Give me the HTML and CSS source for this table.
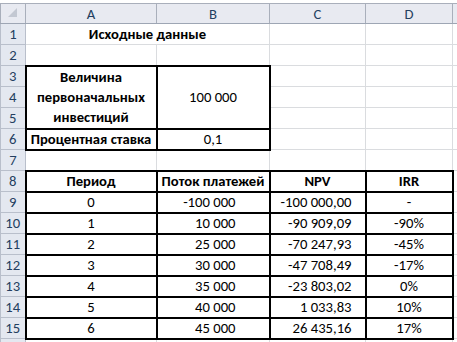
FILE: index.html
```html
<!DOCTYPE html>
<html lang="ru">
<head>
<meta charset="utf-8">
<title>Исходные данные</title>
<link rel="stylesheet" href="styles.css">
</head>
<body>
<table class="sheet">
  <colgroup>
    <col class="c-rh"><col class="c-a"><col class="c-b"><col class="c-c"><col class="c-d"><col class="c-e">
  </colgroup>
  <thead>
    <tr class="hdr">
      <th class="corner"><svg class="tri" width="9" height="9" viewBox="0 0 9 9"><polygon points="9,0 9,9 0,9" fill="#c3c8d2"/></svg></th>
      <th>A</th><th>B</th><th>C</th><th>D</th><th></th>
    </tr>
  </thead>
  <tbody>
    <tr><th>1</th><td colspan="2" class="b c">Исходные данные</td><td></td><td></td><td></td></tr>
    <tr><th>2</th><td></td><td></td><td></td><td></td><td></td></tr>
    <tr><th>3</th><td rowspan="3" class="tk b c multi">Величина<br>первоначальных<br>инвестиций</td><td rowspan="3" class="tk c">100&nbsp;000</td><td></td><td></td><td></td></tr>
    <tr><th>4</th><td></td><td></td><td></td></tr>
    <tr><th>5</th><td></td><td></td><td></td></tr>
    <tr><th>6</th><td class="tk b c">Процентная ставка</td><td class="tk c">0,1</td><td></td><td></td><td></td></tr>
    <tr><th>7</th><td></td><td></td><td></td><td></td><td></td></tr>
    <tr><th>8</th><td class="tk b c">Период</td><td class="tk b c">Поток платежей</td><td class="tk b c">NPV</td><td class="tk b c">IRR</td><td></td></tr>
    <tr><th>9</th><td class="tk c">0</td><td class="tk flow">-100&nbsp;000</td><td class="tk npv">-100&nbsp;000,00</td><td class="tk c">-</td><td></td></tr>
    <tr><th>10</th><td class="tk c">1</td><td class="tk flow">10&nbsp;000</td><td class="tk npv">-90&nbsp;909,09</td><td class="tk c">-90%</td><td></td></tr>
    <tr><th>11</th><td class="tk c">2</td><td class="tk flow">25&nbsp;000</td><td class="tk npv">-70&nbsp;247,93</td><td class="tk c">-45%</td><td></td></tr>
    <tr><th>12</th><td class="tk c">3</td><td class="tk flow">30&nbsp;000</td><td class="tk npv">-47&nbsp;708,49</td><td class="tk c">-17%</td><td></td></tr>
    <tr><th>13</th><td class="tk c">4</td><td class="tk flow">35&nbsp;000</td><td class="tk npv">-23&nbsp;803,02</td><td class="tk c">0%</td><td></td></tr>
    <tr><th>14</th><td class="tk c">5</td><td class="tk flow">40&nbsp;000</td><td class="tk npv">1&nbsp;033,83</td><td class="tk c">10%</td><td></td></tr>
    <tr><th>15</th><td class="tk c">6</td><td class="tk flow">45&nbsp;000</td><td class="tk npv">26&nbsp;435,16</td><td class="tk c">17%</td><td></td></tr>
    <tr><th></th><td></td><td></td><td></td><td></td><td></td></tr>
  </tbody>
</table>
</body>
</html>
```

FILE: styles.css
```css
html, body {
  margin: 0;
  padding: 0;
  background: #ffffff;
  overflow: hidden;
}
body {
  padding-top: 3px;
  font-family: Calibri, Carlito, "Liberation Sans", Arial, sans-serif;
  font-size: 14.67px;
  color: #000;
}
.sheet {
  border-collapse: collapse;
  table-layout: fixed;
  width: 512px;
}
.c-rh { width: 25px; }
.c-a { width: 131px; }
.c-b { width: 113px; }
.c-c { width: 96px; }
.c-d { width: 87px; }
.c-e { width: 60px; }

.sheet tr { height: 21px; }
.sheet tr.hdr { height: 20px; }

.sheet th {
  padding: 0;
  font-weight: normal;
  color: #243f60;
  text-align: center;
  vertical-align: middle;
  line-height: 16px;
  background: #e4e8f0;
  border: 1px solid #b9bfcb;
}
.hdr th {
  background: #e8eaf1;
  border-top: 1px solid #a9afbb;
  border-bottom: 1px solid #9ea6b4;
  border-left: 1px solid #a9afbb;
  border-right: 1px solid #a9afbb;
}
tbody th {
  border-right: 1px solid #9ea6b4;
  border-top: 1px solid #c9cdd8;
  border-bottom: 1px solid #c9cdd8;
}
.corner {
  text-align: right;
  vertical-align: bottom;
  line-height: 0;
}
.tri { margin: 0 2px 2px 0; }

.sheet td {
  padding: 0 2px;
  border: 1px solid #dadcdf;
  vertical-align: middle;
  white-space: nowrap;
  overflow: hidden;
  line-height: 16px;
}
.sheet td.tk { border: 2px solid #000; }
.b { font-weight: bold; }
.c { text-align: center; }
.sheet td.flow { text-align: right; padding-right: 33px; }
.sheet td.npv { text-align: right; padding-right: 13px; }
.sheet td.multi { line-height: 20.3px; }
```
